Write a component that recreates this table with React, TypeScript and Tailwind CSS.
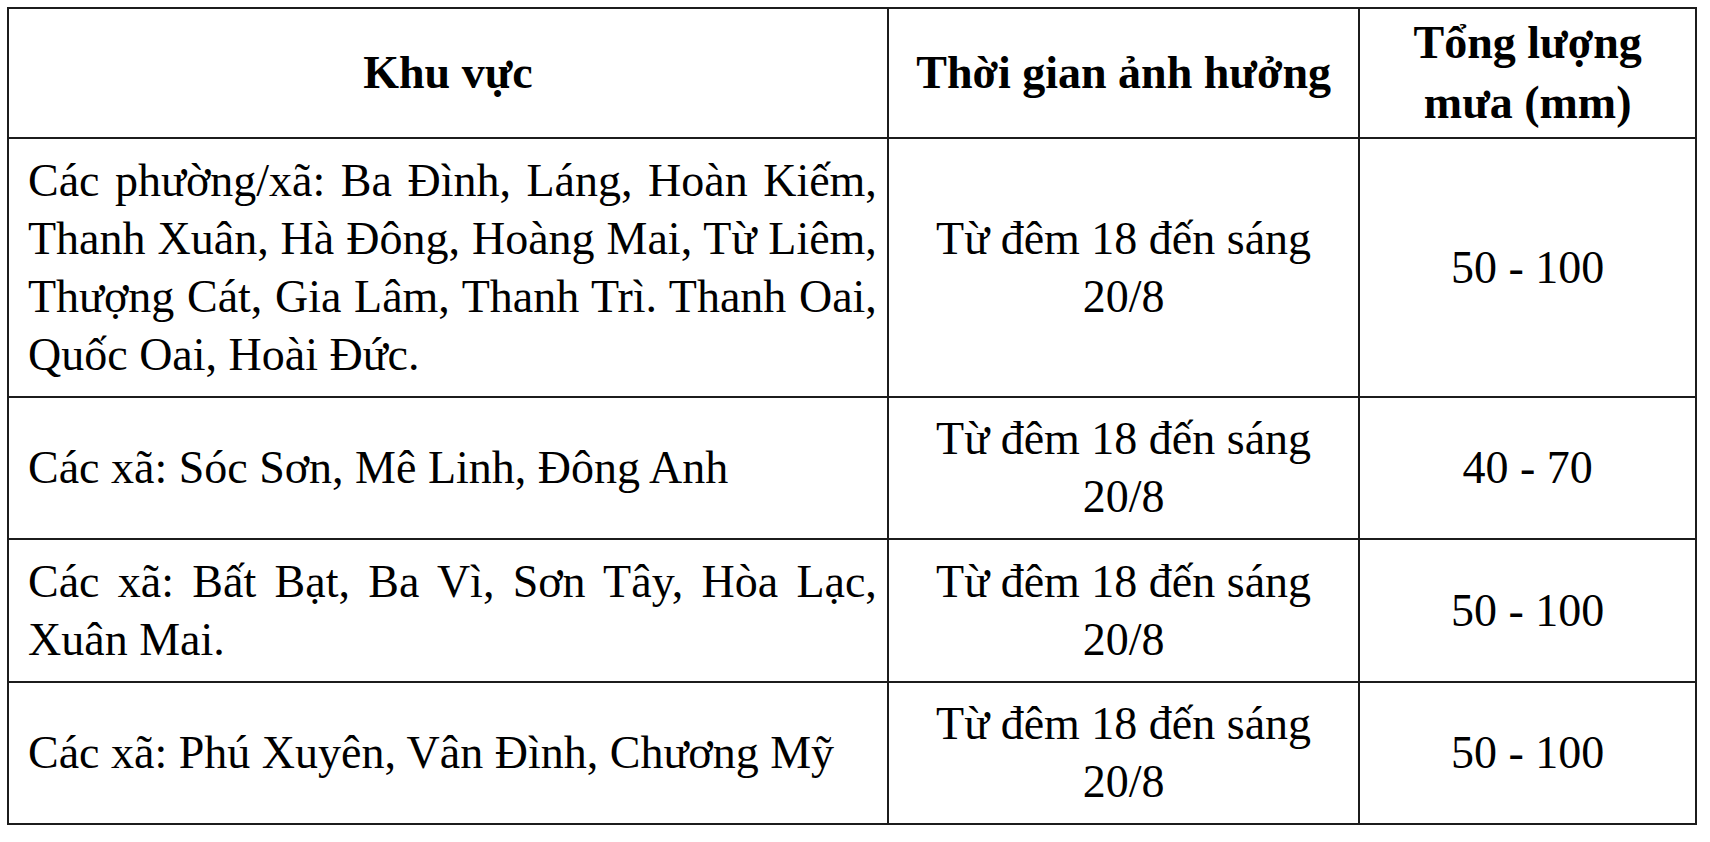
const rows = [
  {
    area: [
      'Các phường/xã: Ba Đình, Láng, Hoàn Kiếm,',
      'Thanh Xuân, Hà Đông, Hoàng Mai, Từ Liêm,',
      'Thượng Cát, Gia Lâm, Thanh Trì. Thanh Oai,',
      'Quốc Oai, Hoài Đức.',
    ],
    rain: '50 - 100',
  },
  { area: ['Các xã: Sóc Sơn, Mê Linh, Đông Anh'], rain: '40 - 70' },
  {
    area: ['Các xã: Bất Bạt, Ba Vì, Sơn Tây, Hòa Lạc,', 'Xuân Mai.'],
    rain: '50 - 100',
  },
  { area: ['Các xã: Phú Xuyên, Vân Đình, Chương Mỹ'], rain: '50 - 100' },
];

// row heights taken from the reference grid lines
const rowHeights = ['h-[259px]', 'h-[142px]', 'h-[143px]', 'h-[142px]'];

export default function App() {
  return (
    <div className="min-h-screen bg-white text-black font-['Liberation_Serif',serif]">
      <div className="pl-[7px] pt-[7px]">
        <table className="w-[1690px] border-collapse border-2 border-[#1c1c1c] font-['Liberation_Serif',serif] text-[46px] leading-[58px] text-black">
          <colgroup>
            <col className="w-[881px]" />
            <col className="w-[472px]" />
            <col className="w-[337px]" />
          </colgroup>
          <thead>
            <tr className="h-[130px]">
              <th className="border-2 border-[#1c1c1c] px-4 font-bold text-center align-middle">Khu vực</th>
              <th className="border-2 border-[#1c1c1c] px-4 font-bold text-center align-middle">Thời gian ảnh hưởng</th>
              <th className="border-2 border-[#1c1c1c] px-4 font-bold text-center align-middle leading-[60px]">
                Tổng lượng
                <br />
                mưa (mm)
              </th>
            </tr>
          </thead>
          <tbody>
            {rows.map((r, i) => (
              <tr key={i} className={rowHeights[i]}>
                <td className="border-2 border-[#1c1c1c] pl-[19px] pr-[10px] align-middle">
                  {r.area.map((line, j) => (
                    <div
                      key={j}
                      className={
                        j < r.area.length - 1 ? 'text-justify [text-align-last:justify]' : 'text-left'
                      }
                    >
                      {line}
                    </div>
                  ))}
                </td>
                <td className="border-2 border-[#1c1c1c] px-4 text-center align-middle">
                  Từ đêm 18 đến sáng
                  <br />
                  20/8
                </td>
                <td className="border-2 border-[#1c1c1c] px-4 text-center align-middle">{r.rain}</td>
              </tr>
            ))}
          </tbody>
        </table>
      </div>
    </div>
  );
}
